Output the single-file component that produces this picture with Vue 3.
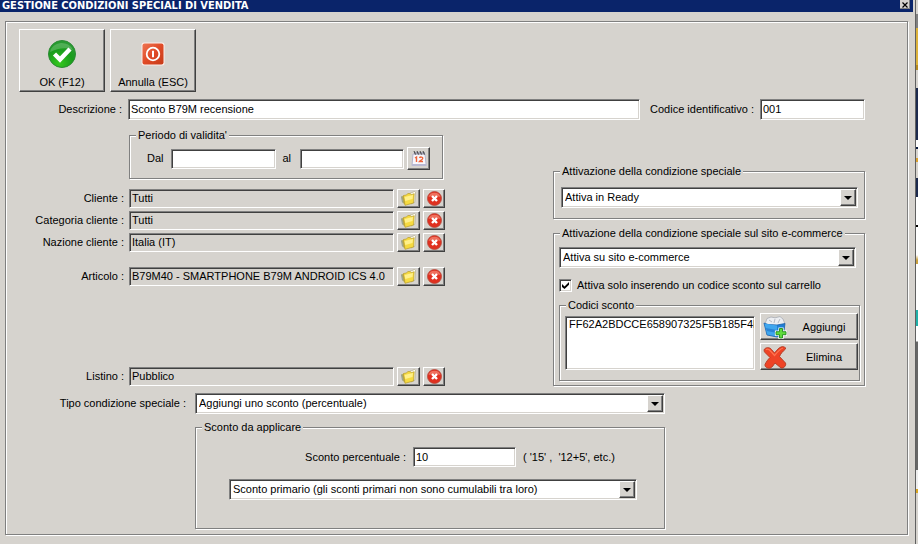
<script setup>
import { onMounted, ref } from 'vue'

const description = ref('Sconto B79M recensione')
const code = ref('001')
const dateFrom = ref('')
const dateTo = ref('')
const needsCode = ref(true)
const percent = ref('10')
const descriptionBox = ref(null)

const filters = ref([
  { id: 'cliente', label: 'Cliente :', value: 'Tutti' },
  { id: 'categoria', label: 'Categoria cliente :', value: 'Tutti' },
  { id: 'nazione', label: 'Nazione cliente :', value: 'Italia (IT)' },
  { id: 'articolo', label: 'Articolo :', value: 'B79M40 - SMARTPHONE B79M ANDROID ICS 4.0' },
  { id: 'listino', label: 'Listino :', value: 'Pubblico' },
])
const discountCodes = ref(['FF62A2BDCCE658907325F5B185F4B0'])

onMounted(() => {
  descriptionBox.value.focus()
  descriptionBox.value.setSelectionRange(0, 0)
})
</script>

<template>
  <div class="screen">
    <main class="dialog">
      <header class="title-bar">
        <h1>GESTIONE CONDIZIONI SPECIALI DI VENDITA</h1>
        <button class="close" type="button" aria-label="Chiudi">
          <svg viewBox="0 0 6 6" width="6" height="6">
            <path d="M0.500 0.500l5 5M5.500 0.500l-5 5" stroke="#000" stroke-width="1.200" />
          </svg>
        </button>
      </header>

      <form class="panel" @submit.prevent>
        <div class="toolbar">
          <button class="raised tool" type="submit">
            <svg viewBox="0 0 28 28" width="28" height="28">
              <defs>
                <radialGradient id="okFill" cx="0.4" cy="0.85" r="0.9">
                  <stop offset="0" stop-color="#35c81e" />
                  <stop offset="0.55" stop-color="#1a9d1c" />
                  <stop offset="1" stop-color="#2f9a3a" />
                </radialGradient>
              </defs>
              <circle cx="14" cy="14" r="13.5" fill="url(#okFill)" stroke="#2d8a35" />
              <path d="M2 12a12 11 0 0 1 23-2C18 7 10 8 2 12z" fill="#fff" opacity="0.2" />
              <path d="M6.500 14l5.500 5.500L22 9" fill="none" stroke="#fff" stroke-width="4.400" stroke-linejoin="miter" />
            </svg>
            <span>OK (F12)</span>
          </button>
          <button class="raised tool" type="button">
            <svg viewBox="0 0 28 28" width="28" height="28">
              <defs>
                <linearGradient id="offFill" x1="0" y1="0" x2="1" y2="1">
                  <stop offset="0" stop-color="#ee7452" />
                  <stop offset="0.5" stop-color="#e04a26" />
                  <stop offset="1" stop-color="#c63a18" />
                </linearGradient>
              </defs>
              <rect x="2.5" y="2.5" width="23" height="23" rx="2.5" fill="#fbeee9" />
              <rect x="3.5" y="3.5" width="21" height="21" rx="2" fill="url(#offFill)" />
              <circle cx="14" cy="14" r="6.3" fill="none" stroke="#fff" stroke-width="1.8" />
              <path d="M14 10.8v6.4" stroke="#fff" stroke-width="2" />
            </svg>
            <span>Annulla (ESC)</span>
          </button>
        </div>

        <div class="heading-row">
          <label class="right" for="descrizione">Descrizione :</label>
          <input id="descrizione" ref="descriptionBox" v-model="description" class="sunken" type="text">
          <label class="code-label" for="codice">Codice identificativo :</label>
          <input id="codice" v-model="code" class="sunken" type="text">
        </div>

        <div class="columns">
          <div class="left">
            <fieldset class="period">
              <legend>Periodo di validita'</legend>
              <div class="period-row">
                <label for="dal">Dal</label>
                <input id="dal" v-model="dateFrom" class="sunken" type="text">
                <label class="to" for="al">al</label>
                <input id="al" v-model="dateTo" class="sunken" type="text">
                <button class="raised calendar" type="button" aria-label="Calendario">
                  <svg viewBox="0 0 16 16" width="16" height="16">
                    <path d="M2 3h12l1.200 11.500H1z" fill="#f8f7fc" stroke="#b4b4cc" />
                    <path d="M1 13h14v2H1z" fill="#b9b9d2" />
                    <path d="M3 1h11v2.500H3z" fill="#a5a5b4" />
                    <path d="M3 0l1.500 3.500M6 0l1.500 3.500M9 0l1.500 3.500M12 0l1.500 3.500" stroke="#444" />
                    <path d="M4 7l1.500-1v5M8.500 7c.5-1.300 3.500-1.300 3.200.5-.2 1.200-2 1.500-3.200 3H12" fill="none" stroke="#ee6338" stroke-width="1.400" />
                  </svg>
                </button>
              </div>
            </fieldset>

            <div v-for="f in filters" :key="f.id" class="filter" :class="f.id">
              <label class="right" :for="f.id">{{ f.label }}</label>
              <input :id="f.id" class="sunken readonly" type="text" :value="f.value" readonly>
              <button class="raised mini" type="button" aria-label="Scegli">
                <svg viewBox="0 0 17 15" width="17" height="15">
                  <path d="M9.500 2.500L14.500.5l1 .8-.7 10-3.800 1.700z" fill="#fffef2" stroke="#b5ae90" stroke-width="0.8" />
                  <path d="M1.500 5.500L4 4.500l1.500 9.500-2.500-2z" fill="#b5a75c" />
                  <path d="M3.500 4.500l3-.5L7.800 2.500l2.700.2.700 1 3-1L13.500 12 5 14.300z" fill="#f6da40" stroke="#b89c28" stroke-width="0.7" />
                  <path d="M4.500 6L13 4l-.5 4-7.200 2z" fill="#fff08a" />
                  <path d="M1.500 5.500l1 6" stroke="#8fa08c" />
                </svg>
              </button>
              <button class="raised mini" type="button" aria-label="Rimuovi">
                <svg viewBox="0 0 15 15" width="15" height="15">
                  <circle cx="7.500" cy="7.500" r="7" fill="#e0301f" stroke="#b5493d" stroke-width="0.8" />
                  <path d="M1.500 6a6.200 5.700 0 0 1 12 0C9 4.500 6 4.500 1.500 6z" fill="#f58c78" opacity="0.7" />
                  <path d="M5 5l5 5M10 5l-5 5" stroke="#fff" stroke-width="2.400" />
                </svg>
              </button>
            </div>
          </div>

          <div class="side">
            <fieldset class="ready">
              <legend>Attivazione della condizione speciale</legend>
              <div class="combo sunken">
                <select aria-label="Attivazione della condizione speciale">
                  <option>Attiva in Ready</option>
                </select>
                <span class="arrow raised"></span>
              </div>
            </fieldset>

            <fieldset class="shop">
              <legend>Attivazione della condizione speciale sul sito e-commerce</legend>
              <div class="combo sunken">
                <select aria-label="Attivazione sul sito e-commerce">
                  <option>Attiva su sito e-commerce</option>
                </select>
                <span class="arrow raised"></span>
              </div>
              <label class="check">
                <input v-model="needsCode" type="checkbox">
                <span>Attiva solo inserendo un codice sconto sul carrello</span>
              </label>

              <fieldset class="codes">
                <legend>Codici sconto</legend>
                <div class="codes-row">
                  <select class="sunken list" size="4" multiple aria-label="Codici sconto">
                    <option v-for="c in discountCodes" :key="c">{{ c }}</option>
                  </select>
                  <div class="code-actions">
                    <button class="raised action" type="button">
                      <svg viewBox="0 0 24 23" width="24" height="23">
                        <path d="M2 8l2-5.500L8 1l4 .8L17 .6l3 2.400 2 5-3 3H4z" fill="#eceef2" stroke="#a7abb3" stroke-width="0.8" />
                        <path d="M6 4l3 2M12 3l-1 4M17 3l-2 4" stroke="#b7bac2" />
                        <path d="M1 7l4 1.500 9 .5 8-1.500-1.500 11L14 21 4 19z" fill="#1f7fd6" stroke="#1c5fa8" stroke-width="0.8" />
                        <path d="M1.500 7.500L14 9.500v11L4.200 18.500z" fill="#3fa6ee" />
                        <path d="M2.500 12L14 14v3L4 15z" fill="#1a6cc4" opacity="0.6" />
                        <path d="M16.500 12.500h3v3.200H23v3h-3.500V22h-3v-3.300H13v-3h3.500z" fill="#5fdc3c" stroke="#fff" stroke-width="2.200" />
                        <path d="M16.500 12.500h3v3.200H23v3h-3.500V22h-3v-3.300H13v-3h3.500z" fill="#5fdc3c" stroke="#228a1d" stroke-width="0.9" />
                      </svg>
                      <span>Aggiungi</span>
                    </button>
                    <button class="raised action" type="button">
                      <svg viewBox="0 0 24 23" width="24" height="23">
                        <path d="M1.500 3c2-2 5.500-1.700 7 .5l3 3.500C14 4 16 1.500 18.500.8c2.500-.6 4.500.5 4 2.200-3 2.500-5 5-6 7.500l6 6.500c1 2.500-1.500 5.500-4.500 5L12 17c-1.500 2-2.500 4-4.500 5-2.500.8-6-.8-5.500-3.500 1-2.500 3-5 5-7L2 6.500C1 5.500.8 4 1.500 3z" fill="#ee4326" stroke="#b03a22" stroke-width="0.9" />
                        <path d="M3 3.700c1.500-1 3.200-.2 4.500 1.300l4 4.500C14 6.500 16 3.500 20 2" fill="none" stroke="#ff7450" stroke-width="1.200" />
                      </svg>
                      <span>Elimina</span>
                    </button>
                  </div>
                </div>
              </fieldset>
            </fieldset>
          </div>
        </div>

        <div class="type-row">
          <label class="right" for="tipo">Tipo condizione speciale :</label>
          <div class="combo sunken">
            <select id="tipo">
              <option>Aggiungi uno sconto (percentuale)</option>
            </select>
            <span class="arrow raised"></span>
          </div>
          <fieldset class="discount">
            <legend>Sconto da applicare</legend>
            <div class="percent-row">
              <label class="right" for="percentuale">Sconto percentuale :</label>
              <input id="percentuale" v-model="percent" class="sunken" type="text">
              <span class="hint">( '15' ,&nbsp; '12+5', etc.)</span>
            </div>
            <div class="combo sunken">
              <select aria-label="Tipo di sconto">
                <option>Sconto primario (gli sconti primari non sono cumulabili tra loro)</option>
              </select>
              <span class="arrow raised"></span>
            </div>
          </fieldset>
        </div>
      </form>
    </main>
    <div class="behind" aria-hidden="true"></div>
  </div>
</template>

<style>
body {
  background: #d6d3ce;
}
</style>

<style scoped>
.screen {
  display: flex;
  min-height: 100vh;
  background: #d6d3ce;
  color: #000;
  font: 11px/13px "Liberation Sans", Arial, sans-serif;
}
.screen * {
  box-sizing: border-box;
}
.dialog {
  flex: 1;
  min-width: 0;
  padding-right: 2px;
  border-right: 1px solid #606060;
}
.behind {
  width: 2px;
  background: linear-gradient(#d6d3ce 14px, #808080 14px 28px, #dcb23a 28px 65px, #b58a20 65px 70px,
    #d6d3ce 70px 88px, #1c2a4d 88px 140px, #fff 140px 147px, #0a1a40 147px 149px, #d6d3ce 149px 158px,
    #d9a030 158px 162px, #d6d3ce 162px 178px, #1c2a4d 178px 197px, #fff 197px 225px, #000 225px 227px,
    #fff 227px 255px, #c9a040 260px 264px, #fff 264px 310px, #20b0a8 310px 326px, #fff 326px 341px,
    #666 342px 470px, #eee 470px 489px, #d9a520 489px 493px, #d6d3ce 493px);
}
.title-bar {
  display: flex;
  align-items: flex-start;
  justify-content: space-between;
  height: 12px;
  padding: 0 3px 0 2px;
  background: #0a246a;
  color: #fff;
}
h1 {
  margin: 0;
  font: bold 11px/12px "DejaVu Sans Condensed", Tahoma, sans-serif;
  white-space: nowrap;
}
button,
input,
select {
  margin: 0;
  padding: 0;
  border-radius: 0;
  color: inherit;
  font: inherit;
}
.close {
  display: flex;
  align-items: center;
  justify-content: center;
  width: 10px;
  height: 9px;
  border: 0;
  background: #d6d3ce;
  box-shadow: inset -1px -1px #808080;
}
.panel {
  margin: 9px 5px 0;
  padding: 7px 42px 5px 13px;
  border: 1px solid #808080;
  box-shadow: 1px 1px #fff, inset 1px 1px #fff;
}
.raised {
  border: 1px solid;
  border-color: #fff #404040 #404040 #fff;
  background: #d6d3ce;
  box-shadow: inset -1px -1px #808080;
}
.sunken {
  width: 100%;
  min-width: 0;
  border: 1px solid;
  border-color: #808080 #fff #fff #808080;
  outline: 0;
  background: #fff;
  box-shadow: inset 1px 1px #404040, inset -1px -1px #d6d3ce;
}
input.sunken {
  height: 20px;
  padding: 0 2px 1px;
}
input.readonly {
  height: 19px;
  background: #d6d3ce;
}
.right {
  text-align: right;
  white-space: nowrap;
}
.toolbar {
  display: flex;
  gap: 5px;
}
.tool {
  display: flex;
  flex-direction: column;
  align-items: center;
  justify-content: flex-end;
  gap: 8px;
  width: 86px;
  height: 63px;
  padding-bottom: 2px;
}
.heading-row {
  display: grid;
  grid-template-columns: 103px minmax(0, 1fr) auto 105px;
  align-items: center;
  gap: 6px;
  margin-top: 7px;
}
.heading-row .sunken {
  height: 21px;
}
.code-label {
  padding-left: 4px;
}
.columns {
  display: grid;
  grid-template-columns: minmax(0, 426fr) minmax(0, 312fr);
  gap: 108px;
  padding-top: 9px;
}
fieldset {
  --inset: 7px;
  min-width: 0;
  margin: 0;
  padding: 0;
  border: 1px solid #808080;
  box-shadow: 1px 1px #fff, inset 1px 1px #fff;
}
legend {
  margin-left: calc(6px - var(--inset));
  padding: 0 2px;
  background: #d6d3ce;
  white-space: nowrap;
}
.period {
  --inset: 17px;
  margin: 0 2px 10px 110px;
  padding: 5px 12px 8px var(--inset);
}
.period-row {
  display: grid;
  grid-template-columns: 24px minmax(0, 1fr) 24px minmax(0, 1fr) 26px;
  align-items: center;
}
.to {
  padding-left: 7px;
}
.calendar {
  display: flex;
  align-items: center;
  justify-content: center;
  justify-self: end;
  width: 23px;
  height: 23px;
}
.filter {
  display: grid;
  grid-template-columns: 105px minmax(0, 1fr) 23px 22px;
  align-items: center;
  gap: 3px;
  margin-bottom: 3px;
}
.filter .sunken {
  width: auto;
  margin-left: 2px;
}
.articolo {
  margin-top: 15px;
}
.listino {
  margin-top: 81px;
  margin-bottom: 0;
}
.mini {
  display: flex;
  align-items: center;
  justify-content: center;
  height: 19px;
}
.side {
  padding-top: 36px;
}
.combo {
  display: grid;
  grid-template-columns: minmax(0, 1fr) 16px;
  height: 21px;
  padding: 1px;
}
.combo select {
  grid-area: 1 / 1 / 2 / 3;
  width: 100%;
  padding: 0 18px 0 2px;
  border: 0;
  outline: 0;
  appearance: none;
  background: transparent;
}
.arrow {
  display: flex;
  grid-area: 1 / 2;
  align-items: center;
  justify-content: center;
  pointer-events: none;
}
.arrow::before {
  border: 4px solid transparent;
  border-top-color: #000;
  border-bottom: 0;
  content: "";
}
.ready {
  margin-bottom: 8px;
  padding: 9px 6px 10px var(--inset);
}
.shop {
  --inset: 5px;
  padding: 7px 4px 4px var(--inset);
}
.shop > .combo {
  width: auto;
  margin-right: 4px;
}
.check {
  display: flex;
  align-items: center;
  gap: 5px;
  margin: 11px 0 7px;
  white-space: nowrap;
}
.check input {
  display: grid;
  place-items: center;
  width: 13px;
  height: 13px;
  border: 1px solid;
  border-color: #808080 #fff #fff #808080;
  appearance: none;
  background: #fff;
  box-shadow: inset 1px 1px #404040, inset -1px -1px #d6d3ce;
}
.check input:checked::before {
  width: 7px;
  height: 7px;
  background: #000;
  clip-path: polygon(0 30%, 36% 64%, 100% 0, 100% 40%, 36% 100%, 0 70%);
  content: "";
}
.codes {
  --inset: 5px;
  padding: 1px 1px 10px var(--inset);
}
.codes-row {
  display: grid;
  grid-template-columns: minmax(0, 1fr) 98px;
  gap: 5px;
}
.list {
  height: 54px;
  margin-top: 3px;
  padding: 1px 2px;
  overflow: hidden;
}
.list option {
  min-height: 0;
  padding: 0 1px;
}
.code-actions {
  display: grid;
  gap: 3px;
}
.action {
  display: grid;
  grid-template-columns: 24px minmax(0, 1fr);
  align-items: center;
  height: 27px;
  padding: 2px 0 0 2px;
}
.action span {
  padding-left: 4px;
}
.type-row {
  display: grid;
  grid-template-columns: 167px minmax(0, 1fr);
  align-items: center;
  gap: 7px 9px;
  margin-top: 7px;
  padding-right: 200px;
}
.discount {
  --inset: 33px;
  grid-column: 2;
  padding: 13px 27px 28px var(--inset);
}
.percent-row {
  display: grid;
  grid-template-columns: 177px 103px auto;
  align-items: center;
  gap: 7px;
  margin-bottom: 12px;
}
.hint {
  white-space: nowrap;
}
</style>
